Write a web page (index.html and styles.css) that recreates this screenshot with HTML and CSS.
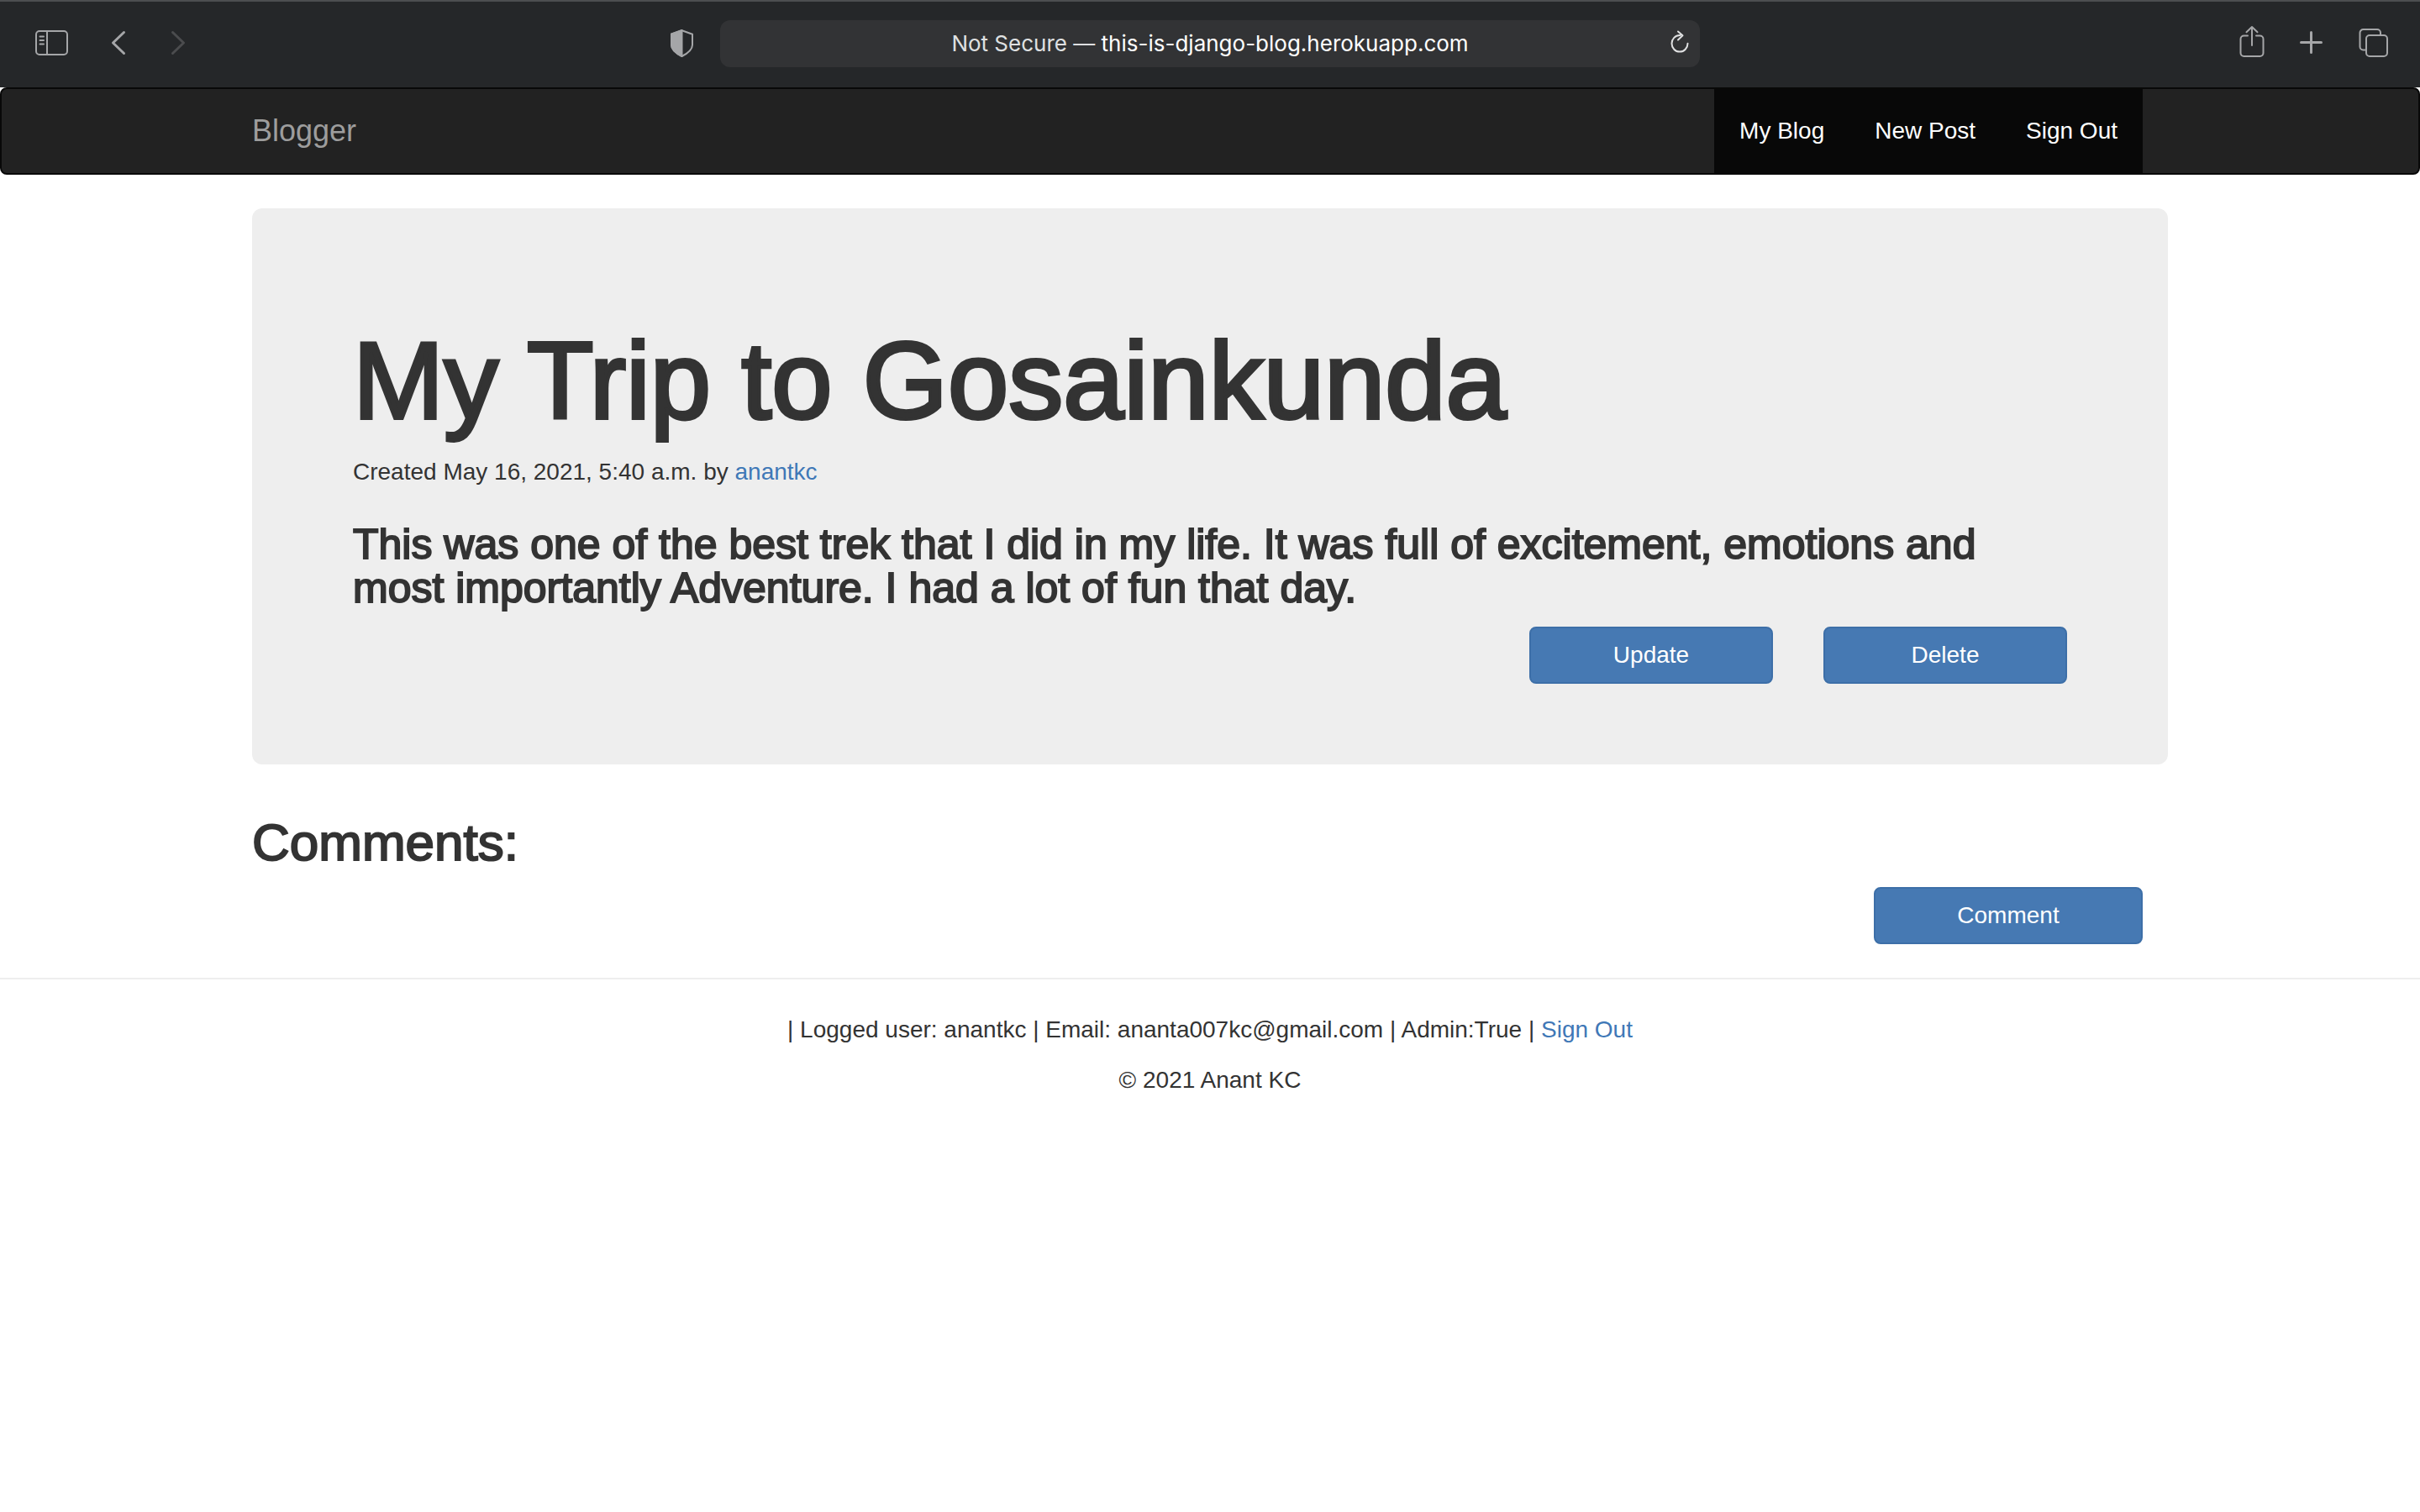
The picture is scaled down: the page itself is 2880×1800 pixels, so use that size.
FILE: index.html
```html
<!DOCTYPE html>
<html lang="en">
<head>
  <meta charset="utf-8">
  <title>Blogger</title>
  <link rel="stylesheet" href="styles.css">
</head>
<body>
  <div class="toolbar">
    <div class="toolbar-left">
      <button class="tool" type="button" aria-label="Show sidebar">
        <svg width="40" height="44" viewBox="0 0 40 44"><rect x="1" y="7" width="37" height="28" rx="4"/><path d="M14 7v28M5.500 13.500h4.500M5.500 18h4.500M5.500 22.500h4.500"/></svg>
      </button>
      <button class="tool" type="button" aria-label="Back">
        <svg class="heavy" width="20" height="44" viewBox="0 0 20 44"><path d="M15.500 8.500L2.500 21l13 12.500"/></svg>
      </button>
      <button class="tool tool-off" type="button" aria-label="Forward" disabled>
        <svg class="heavy" width="20" height="44" viewBox="0 0 20 44"><path d="M3.500 8.500L16.500 21l-13 12.500"/></svg>
      </button>
      <button class="tool tool-shield" type="button" aria-label="Privacy report">
        <svg width="28" height="44" viewBox="0 0 28 44"><path d="M13.500 6.200L26 10.800v12.700c0 6-6 10.200-12.500 13.500C7 33.700 1 29.500 1 23.500V10.800z"/><path class="solid" d="M13.500 6L1 10.500v13C1 29.500 7 33.700 13.500 37z"/></svg>
      </button>
    </div>
    <div class="address">
      <span class="address-text">Not Secure — <span class="address-host">this-is-django-blog.herokuapp.com</span></span>
      <button class="tool tool-reload" type="button" aria-label="Reload">
        <svg width="24" height="44" viewBox="0 0 24 44"><path d="M12.500 12H12a9.500 9.800 0 1 0 9.500 9.800M10 7.500l5.500 4.800-5.500 5.200"/></svg>
      </button>
    </div>
    <div class="toolbar-right">
      <button class="tool" type="button" aria-label="Share">
        <svg width="32" height="44" viewBox="0 0 32 44"><path d="M11 12.500H6.500a4 4 0 0 0-4 4V33a4 4 0 0 0 4 4h19a4 4 0 0 0 4-4V16.500a4 4 0 0 0-4-4H21M16 24V2.500M9.500 8.200L16 2l6.500 6.200"/></svg>
      </button>
      <button class="tool" type="button" aria-label="New tab">
        <svg class="heavy" width="30" height="44" viewBox="0 0 30 44"><path d="M14.500 8.500v24M2.500 20.500h24"/></svg>
      </button>
      <button class="tool" type="button" aria-label="Show all tabs">
        <svg width="38" height="44" viewBox="0 0 38 44"><rect x="10" y="12" width="25" height="25" rx="4"/><path d="M10 29.500H6.500a4 4 0 0 1-4-4V9a4 4 0 0 1 4-4H23a4 4 0 0 1 4 4v3"/></svg>
      </button>
    </div>
  </div>

  <nav class="navbar">
    <div class="container navbar-inner">
      <a class="brand" href="#">Blogger</a>
      <ul class="nav-links">
        <li><a href="#">My Blog</a></li>
        <li><a href="#">New Post</a></li>
        <li><a href="#">Sign Out</a></li>
      </ul>
    </div>
  </nav>

  <main class="container">
    <article class="jumbotron">
      <h1>My Trip to Gosainkunda</h1>
      <p>Created May 16, 2021, 5:40 a.m. by <a href="#">anantkc</a></p>
      <h3>This was one of the best trek that I did in my life. It was full of excitement, emotions and most importantly Adventure. I had a lot of fun that day.</h3>
      <div class="actions">
        <button class="btn" type="button">Update</button>
        <button class="btn" type="button">Delete</button>
      </div>
    </article>
    <section class="comments">
      <h2>Comments:</h2>
      <div class="comment-row">
        <button class="btn btn-wide" type="button">Comment</button>
      </div>
    </section>
  </main>

  <footer class="footer">
    <p>| Logged user: anantkc | Email: ananta007kc@gmail.com | Admin:True | <a href="#">Sign Out</a></p>
    <p>© 2021 Anant KC</p>
  </footer>
</body>
</html>
```
FILE: styles.css
```css
* {
  box-sizing: border-box;
}

body {
  margin: 0;
  background: #fff;
  color: #333;
  font-family: "Liberation Sans", Arial, sans-serif;
  font-size: 28px;
  line-height: 40px;
}

a {
  color: #3f78b7;
  text-decoration: none;
}

h1,
h2,
h3,
p {
  margin: 0;
}

/* Regular outlines thickened to a medium weight */
h1,
h2,
h3 {
  font-weight: 400;
  -webkit-text-stroke: 2px #333;
}

h1 {
  -webkit-text-stroke-width: 4px;
}

/* Browser toolbar */
.toolbar {
  display: grid;
  grid-template-columns: 1fr minmax(0, 1166px) 1fr;
  align-items: center;
  column-gap: 31px;
  min-height: 104px;
  padding-bottom: 2px;
  border-top: 2px solid #4c4e50;
  background: #252729;
}

.toolbar-left,
.toolbar-right {
  display: flex;
  align-items: center;
}

.toolbar-left {
  gap: 50px;
  padding-left: 42px;
}

.toolbar-right {
  justify-content: flex-end;
  gap: 40px;
  padding-right: 36px;
}

.tool {
  display: flex;
  padding: 0;
  border: 0;
  background: none;
  color: #a5a6a8;
}

.tool-off {
  color: #4b4c4e;
}

.tool-shield {
  margin-left: auto;
}

.tool svg {
  fill: none;
  stroke: currentColor;
  stroke-width: 2;
  stroke-linecap: round;
  stroke-linejoin: round;
}

.tool svg.heavy {
  stroke-width: 3;
}

.tool .solid {
  fill: currentColor;
}

.address {
  display: grid;
  grid-template-columns: 1fr auto 1fr;
  align-items: center;
  height: 56px;
  padding: 0 12px;
  border-radius: 12px;
  background: #323335;
  color: #dfe0e1;
  font-family: Inter, sans-serif;
  font-size: 26px;
  font-weight: 400;
}

.address-text {
  grid-column: 2;
  white-space: nowrap;
}

.address-host {
  color: #fff;
}

.tool-reload {
  justify-self: end;
  color: #dfe0e1;
}

/* Page */
.container {
  width: 100%;
  max-width: 2340px;
  margin: 0 auto;
  padding: 0 30px;
}

.navbar {
  margin-bottom: 40px;
  border: 2px solid #080808;
  border-radius: 8px;
  background: #222;
}

.navbar-inner {
  display: flex;
  align-items: center;
  justify-content: space-between;
  padding-right: 60px;
}

.brand {
  color: #9d9d9d;
  font-size: 36px;
}

.nav-links {
  display: flex;
  margin: 0;
  padding: 0;
  background: #080808;
  list-style: none;
}

.nav-links a {
  display: block;
  padding: 30px;
  color: #fff;
}

.jumbotron {
  padding: 136px 120px 96px;
  border-radius: 12px;
  background: #eee;
}

.jumbotron h1 {
  margin-bottom: 20px;
  font-size: 130px;
  line-height: 138px;
}

.jumbotron h3 {
  margin: 40px 0 20px;
  font-size: 50px;
  line-height: 52px;
}

.actions {
  display: flex;
  justify-content: flex-end;
  gap: 60px;
}

.btn {
  width: 290px;
  padding: 12px 24px;
  border: 2px solid #3d6fa8;
  border-radius: 8px;
  background: #4679b3;
  color: #fff;
  font: inherit;
}

.btn-wide {
  width: 320px;
}

.comments {
  padding-top: 60px;
}

.comments h2 {
  margin-bottom: 20px;
  font-size: 62px;
  line-height: 66px;
}

.comment-row {
  display: flex;
  justify-content: flex-end;
  padding-right: 30px;
}

.footer {
  display: flex;
  flex-direction: column;
  gap: 20px;
  margin-top: 40px;
  padding: 40px 0 20px;
  border-top: 2px solid #eee;
  text-align: center;
}
```
